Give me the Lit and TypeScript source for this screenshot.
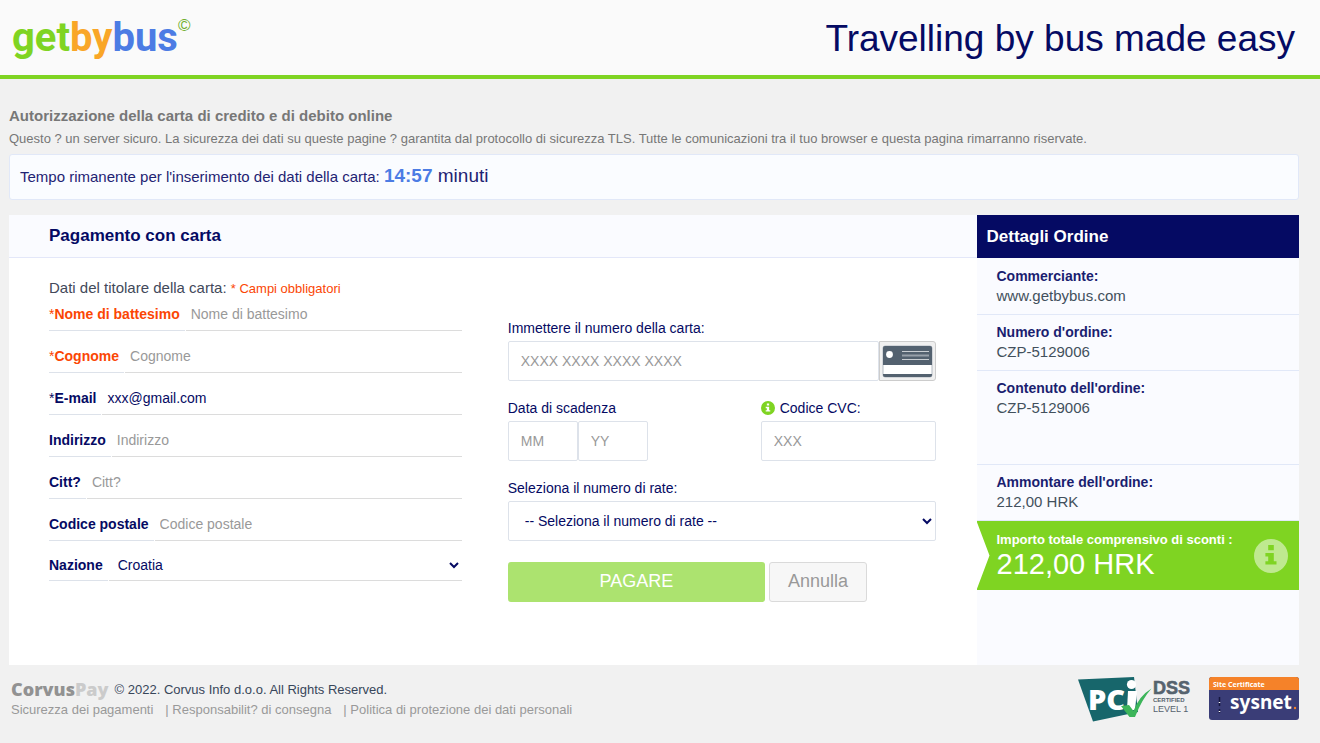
import { LitElement, html, css, nothing } from "lit";
import { customElement } from "lit/decorators.js";

interface Field {
  id: string;
  label: string;
  placeholder: string;
  value?: string;
  starred?: boolean;
  missing?: boolean;
}

const FIELDS: Field[] = [
  { id: "first-name", label: "Nome di battesimo", placeholder: "Nome di battesimo", starred: true, missing: true },
  { id: "last-name", label: "Cognome", placeholder: "Cognome", starred: true, missing: true },
  { id: "email", label: "E-mail", placeholder: "E-mail", value: "xxx@gmail.com", starred: true },
  { id: "address", label: "Indirizzo", placeholder: "Indirizzo" },
  { id: "city", label: "Citt?", placeholder: "Citt?" },
  { id: "zip", label: "Codice postale", placeholder: "Codice postale" },
];

const ORDER = [
  { term: "Commerciante:", value: "www.getbybus.com" },
  { term: "Numero d'ordine:", value: "CZP-5129006" },
  { term: "Contenuto dell'ordine:", value: "CZP-5129006", tall: true },
  { term: "Ammontare dell'ordine:", value: "212,00 HRK" },
];

const LINKS = ["Sicurezza dei pagamenti", "Responsabilit? di consegna", "Politica di protezione dei dati personali"];

@customElement("info-icon")
export class InfoIcon extends LitElement {
  static styles = css`
    :host { display: inline-block; }
    .icon { display: block; width: 100%; height: 100%; fill: currentColor; }
  `;
  render() {
    return html`<svg class="icon" viewBox="0 0 34 34" aria-hidden="true">
      <path fill-rule="evenodd" d="M17 0a17 17 0 1 0 0 34a17 17 0 1 0 0-34zM14.2 6h5.6v5.2h-5.6zM11.4 14h8.4v8.2h2.7v3.4H11.4v-3.4h2.8v-4.8h-2.8z"/>
    </svg>`;
  }
}

@customElement("site-header")
export class SiteHeader extends LitElement {
  static styles = css`
    :host {
      display: flex;
      align-items: center;
      justify-content: space-between;
      height: 75px;
      padding: 0 25px 0 12px;
      background: #fafafa;
      border-bottom: 4px solid #7fd422;
    }
    .logo { display: flex; align-items: flex-start; text-decoration: none; }
    .word { font: bold 40px/72px Roboto, "Liberation Sans", sans-serif; }
    .green { color: #7fd422; }
    .orange { color: #f9a627; }
    .blue { color: #4c7ce4; }
    .mark { margin-top: 14px; font-size: 17px; line-height: 20px; color: #6fae2c; }
    .slogan { margin: 0; padding-top: 3px; font-size: 37px; line-height: 42px; font-weight: normal; color: #050a63; }
  `;
  render() {
    return html`
      <a class="logo" href="#">
        <span class="word"><span class="green">get</span><span class="orange">by</span><span class="blue">bus</span></span>
        <span class="mark">©</span>
      </a>
      <p class="slogan">Travelling by bus made easy</p>
    `;
  }
}

@customElement("holder-form")
export class HolderForm extends LitElement {
  static styles = css`
    :host { display: block; }
    .intro { margin: 0; font-size: 15px; line-height: 19px; color: #42495a; }
    .required { font-size: 13px; line-height: 1; color: #fb4604; }
    .row { display: flex; gap: 1px; height: 34px; margin-bottom: 8px; }
    .row.short { height: 32px; }
    .label {
      padding: 2px 5px 0 0;
      font-size: 14px;
      font-weight: bold;
      line-height: 31px;
      color: #050a63;
      border-bottom: 1px solid #dde2ea;
    }
    .short .label { line-height: 29px; }
    .label.missing { color: #fb4604; }
    .star { font-weight: normal; }
    .control {
      flex: 1;
      min-width: 0;
      box-sizing: border-box;
      padding: 0 5px;
      font: 14px "Liberation Sans", Arial, sans-serif;
      color: #050a63;
      background: transparent;
      border: 0;
      border-bottom: 1px solid #dcdcdc;
      border-radius: 0;
      outline: 0;
    }
    .control::placeholder { color: #999; opacity: 1; }
    .country { padding: 0 0 0 5px; }
  `;
  render() {
    return html`
      <p class="intro">Dati del titolare della carta: <span class="required">* Campi obbligatori</span></p>
      ${FIELDS.map(
        (f) => html`<div class="row">
          <label class="label ${f.missing ? "missing" : ""}" for=${f.id}>${f.starred ? html`<span class="star">*</span>` : nothing}${f.label}</label>
          <input class="control" id=${f.id} type="text" placeholder=${f.placeholder} .value=${f.value ?? ""} />
        </div>`,
      )}
      <div class="row short">
        <label class="label" for="country">Nazione</label>
        <select class="control country" id="country"><option>Croatia</option></select>
      </div>
    `;
  }
}

@customElement("card-form")
export class CardForm extends LitElement {
  static styles = css`
    :host { display: flex; flex-direction: column; gap: 17px; padding-top: 40px; }
    .label {
      display: flex;
      align-items: center;
      gap: 5px;
      margin-bottom: 3px;
      font-size: 14px;
      line-height: 20px;
      color: #050a63;
    }
    .info { width: 14px; height: 14px; color: #7fd422; }
    .line { display: flex; }
    .split { display: flex; justify-content: space-between; }
    .cvc { width: 41%; }
    .control {
      box-sizing: border-box;
      width: 100%;
      min-width: 0;
      height: 40px;
      padding: 0 12px;
      font: 14px "Liberation Sans", Arial, sans-serif;
      color: #050a63;
      background: #fff;
      border: 1px solid #dde2ea;
      border-radius: 2px;
      outline: 0;
    }
    .control::placeholder { color: #999; opacity: 1; }
    .part { width: 70px; }
    .brand {
      display: flex;
      align-items: center;
      justify-content: center;
      box-sizing: border-box;
      flex: none;
      width: 57px;
      height: 40px;
      background: #f0f0f0;
      border: 1px solid #ccc;
      border-radius: 0 3px 3px 0;
    }
    .rates { padding: 0 0 0 12px; }
    .actions { display: flex; gap: 4px; padding-top: 4px; }
    .button {
      box-sizing: border-box;
      height: 40px;
      padding: 0 18px 2px;
      font: 18px "Liberation Sans", Arial, sans-serif;
      border-radius: 3px;
    }
    .pay { flex: 0 0 60%; color: #fff; background: #ace36f; border: 0; }
    .cancel { color: #999; background: #f7f7f7; border: 1px solid #dadada; }
  `;
  render() {
    return html`
      <div>
        <label class="label" for="number">Immettere il numero della carta:</label>
        <div class="line">
          <input class="control" id="number" type="text" placeholder="XXXX XXXX XXXX XXXX" />
          <span class="brand">
            <svg width="51" height="33" viewBox="0 0 51 33" aria-hidden="true">
              <rect x="0.5" y="0.5" width="50" height="32" rx="3" fill="#b3bac2" />
              <path d="M3 1h45a2 2 0 0 1 2 2v17H1V3a2 2 0 0 1 2-2z" fill="#53616f" />
              <path d="M1.5 20h48v9h-48z" fill="#fff" />
              <path d="M1 29h49v1a2 2 0 0 1-2 2H3a2 2 0 0 1-2-2z" fill="#53616f" />
              <circle cx="7.5" cy="9.5" r="3.4" fill="#fff" />
              <path d="M20 6.5h27M20 14.5h27" stroke="#c9ced3" stroke-width="1" />
              <path d="M20 10.5h27" stroke="#98a1aa" stroke-width="2" />
            </svg>
          </span>
        </div>
      </div>
      <div class="split">
        <div>
          <label class="label" for="month">Data di scadenza</label>
          <div class="line">
            <input class="control part" id="month" type="text" placeholder="MM" />
            <input class="control part" id="year" type="text" placeholder="YY" aria-label="Anno di scadenza" />
          </div>
        </div>
        <div class="cvc">
          <label class="label" for="cvc"><info-icon class="info"></info-icon>Codice CVC:</label>
          <input class="control" id="cvc" type="text" placeholder="XXX" />
        </div>
      </div>
      <div>
        <label class="label" for="rates">Seleziona il numero di rate:</label>
        <select class="control rates" id="rates"><option>-- Seleziona il numero di rate --</option></select>
      </div>
      <div class="actions">
        <button class="button pay" type="button">PAGARE</button>
        <button class="button cancel" type="button">Annulla</button>
      </div>
    `;
  }
}

@customElement("order-details")
export class OrderDetails extends LitElement {
  static styles = css`
    :host { display: block; background: #fafbff; }
    .title {
      margin: 0;
      padding: 0 10px;
      font-size: 17px;
      line-height: 43px;
      color: #fff;
      background: #050a63;
    }
    .list { margin: 0; padding-top: 1px; }
    .item {
      box-sizing: border-box;
      min-height: 56px;
      padding: 8px 20px;
      line-height: 19px;
      border-bottom: 1px solid #e1e8f8;
    }
    .tall { min-height: 94px; }
    .term { font-size: 14px; font-weight: bold; color: #1a1e70; }
    .value { margin: 0; font-size: 15px; color: #42505c; }
    .notch { background: #fff; }
    .total {
      display: flex;
      align-items: center;
      justify-content: space-between;
      padding: 10px 11px 10px 20px;
      color: #fff;
      background: #7fd422;
      clip-path: polygon(0 0, 100% 0, 100% 100%, 0 100%, 13px 50%);
    }
    .caption { margin: 0; font-size: 13px; line-height: 18px; font-weight: bold; }
    .amount { margin: 0; font-size: 29px; line-height: 31px; }
    .info { width: 34px; height: 34px; color: #bfe990; }
  `;
  render() {
    return html`
      <h2 class="title">Dettagli Ordine</h2>
      <dl class="list">
        ${ORDER.map(
          (o) => html`<div class="item ${o.tall ? "tall" : ""}">
            <dt class="term">${o.term}</dt>
            <dd class="value">${o.value}</dd>
          </div>`,
        )}
      </dl>
      <div class="notch">
        <div class="total">
          <div>
            <p class="caption">Importo totale comprensivo di sconti :</p>
            <p class="amount">212,00 HRK</p>
          </div>
          <info-icon class="info"></info-icon>
        </div>
      </div>
    `;
  }
}

@customElement("site-footer")
export class SiteFooter extends LitElement {
  static styles = css`
    :host { display: flex; justify-content: space-between; padding: 10px 0 12px 2px; }
    .legal { padding-top: 3px; }
    .owner { display: flex; align-items: center; gap: 6px; height: 22px; }
    .brand { font: 800 18px/22px "Open Sans", sans-serif; color: #929292; }
    .pay { color: #cbcbcb; }
    .copy { font-size: 13px; color: #38465a; }
    .links { display: flex; gap: 12px; line-height: 20px; font-size: 13px; }
    .link { color: #999; text-decoration: none; }
    .link + .link::before { content: "| "; white-space: pre; }
    .badges { display: flex; gap: 16px; }
  `;
  render() {
    return html`
      <div class="legal">
        <div class="owner">
          <span class="brand">Corvus<span class="pay">Pay</span></span>
          <span class="copy">© 2022. Corvus Info d.o.o. All Rights Reserved.</span>
        </div>
        <nav class="links">${LINKS.map((l) => html`<a class="link" href="#">${l}</a>`)}</nav>
      </div>
      <div class="badges">
        <svg width="115" height="48" viewBox="0 0 115 48" role="img" aria-label="PCI DSS">
          <path d="M0 4.500L56 2L60 37L15 46.500z" fill="#17666b" />
          <text x="10" y="35" font-family="Open Sans, sans-serif" font-weight="800" font-size="29" fill="#fff">PC</text>
          <path d="M50 16h9l-2 19h-8z" fill="#fff" />
          <circle cx="53.500" cy="9.500" r="4.600" fill="#fff" />
          <path d="M43 31l8-1 4.500 6Q61 21 73.500 13.500Q64 24 57 42h-5.500z" fill="#3cb55a" />
          <text x="75" y="19" font-family="Liberation Sans, sans-serif" font-weight="bold" font-size="18" fill="#56636e" stroke="#56636e" stroke-width="0.600">DSS</text>
          <text x="75" y="27" font-family="Liberation Sans, sans-serif" font-weight="bold" font-size="6" fill="#56636e">CERTIFIED</text>
          <text x="75" y="37" font-family="Liberation Sans, sans-serif" font-size="9" fill="#56636e">LEVEL 1</text>
        </svg>
        <svg width="90" height="48" viewBox="0 0 90 48" role="img" aria-label="sysnet">
          <rect y="2" width="90" height="43" rx="3" fill="#3a3d77" />
          <path d="M3 2h84a3 3 0 0 1 3 3v10H0V5a3 3 0 0 1 3-3z" fill="#f58229" />
          <text x="4" y="12" font-family="Noto Sans, sans-serif" font-weight="bold" font-size="7" fill="#fff">Site Certificate</text>
          <path d="M10.500 22v9M10.500 34v4" stroke="#14163f" stroke-width="1.500" />
          <path d="M10.500 27v1M10.500 36v1" stroke="#fff" stroke-width="1.500" />
          <text x="21" y="34" font-family="Noto Sans, sans-serif" font-weight="bold" font-size="19" fill="#fff">sysnet</text>
          <circle cx="86" cy="33" r="1.200" fill="#f58229" />
        </svg>
      </div>
    `;
  }
}

@customElement("app-root")
export class AppRoot extends LitElement {
  static styles = css`
    :host {
      display: block;
      min-height: 100vh;
      font-family: "Liberation Sans", Arial, sans-serif;
      background: #f1f1f1;
    }
    .page { padding: 27px 21px 0 9px; }
    .heading { margin: 0; font-size: 15px; line-height: 20px; color: #777; }
    .note { margin: 3px 0 5px; font-size: 13px; line-height: 20px; color: #777; }
    .timer {
      padding: 0 10px;
      font-size: 15px;
      line-height: 44px;
      color: #1f2373;
      background: #fafcff;
      border: 1px solid #e1e8f8;
      border-radius: 3px;
    }
    .clock { font-size: 19px; line-height: 1; }
    .time { color: #4c7ce4; }
    .panel { display: grid; grid-template-columns: 3fr 1fr; min-height: 450px; margin-top: 15px; background: #fff; }
    .title {
      margin: 0;
      padding: 0 40px;
      font-size: 17px;
      line-height: 42px;
      color: #050a63;
      background: #fafbff;
      border-bottom: 1px solid #e3e7f9;
    }
    .forms { display: grid; grid-template-columns: 413fr 429fr; gap: 46px; padding: 20px 40px; }
  `;
  render() {
    return html`
      <site-header></site-header>
      <main class="page">
        <h1 class="heading">Autorizzazione della carta di credito e di debito online</h1>
        <p class="note">Questo ? un server sicuro. La sicurezza dei dati su queste pagine ? garantita dal protocollo di sicurezza TLS. Tutte le comunicazioni tra il tuo browser e questa pagina rimarranno riservate.</p>
        <div class="timer">Tempo rimanente per l'inserimento dei dati della carta: <span class="clock"><b class="time">14:57</b> minuti</span></div>
        <div class="panel">
          <section>
            <h2 class="title">Pagamento con carta</h2>
            <form class="forms">
              <holder-form></holder-form>
              <card-form></card-form>
            </form>
          </section>
          <order-details></order-details>
        </div>
        <site-footer></site-footer>
      </main>
    `;
  }
}
